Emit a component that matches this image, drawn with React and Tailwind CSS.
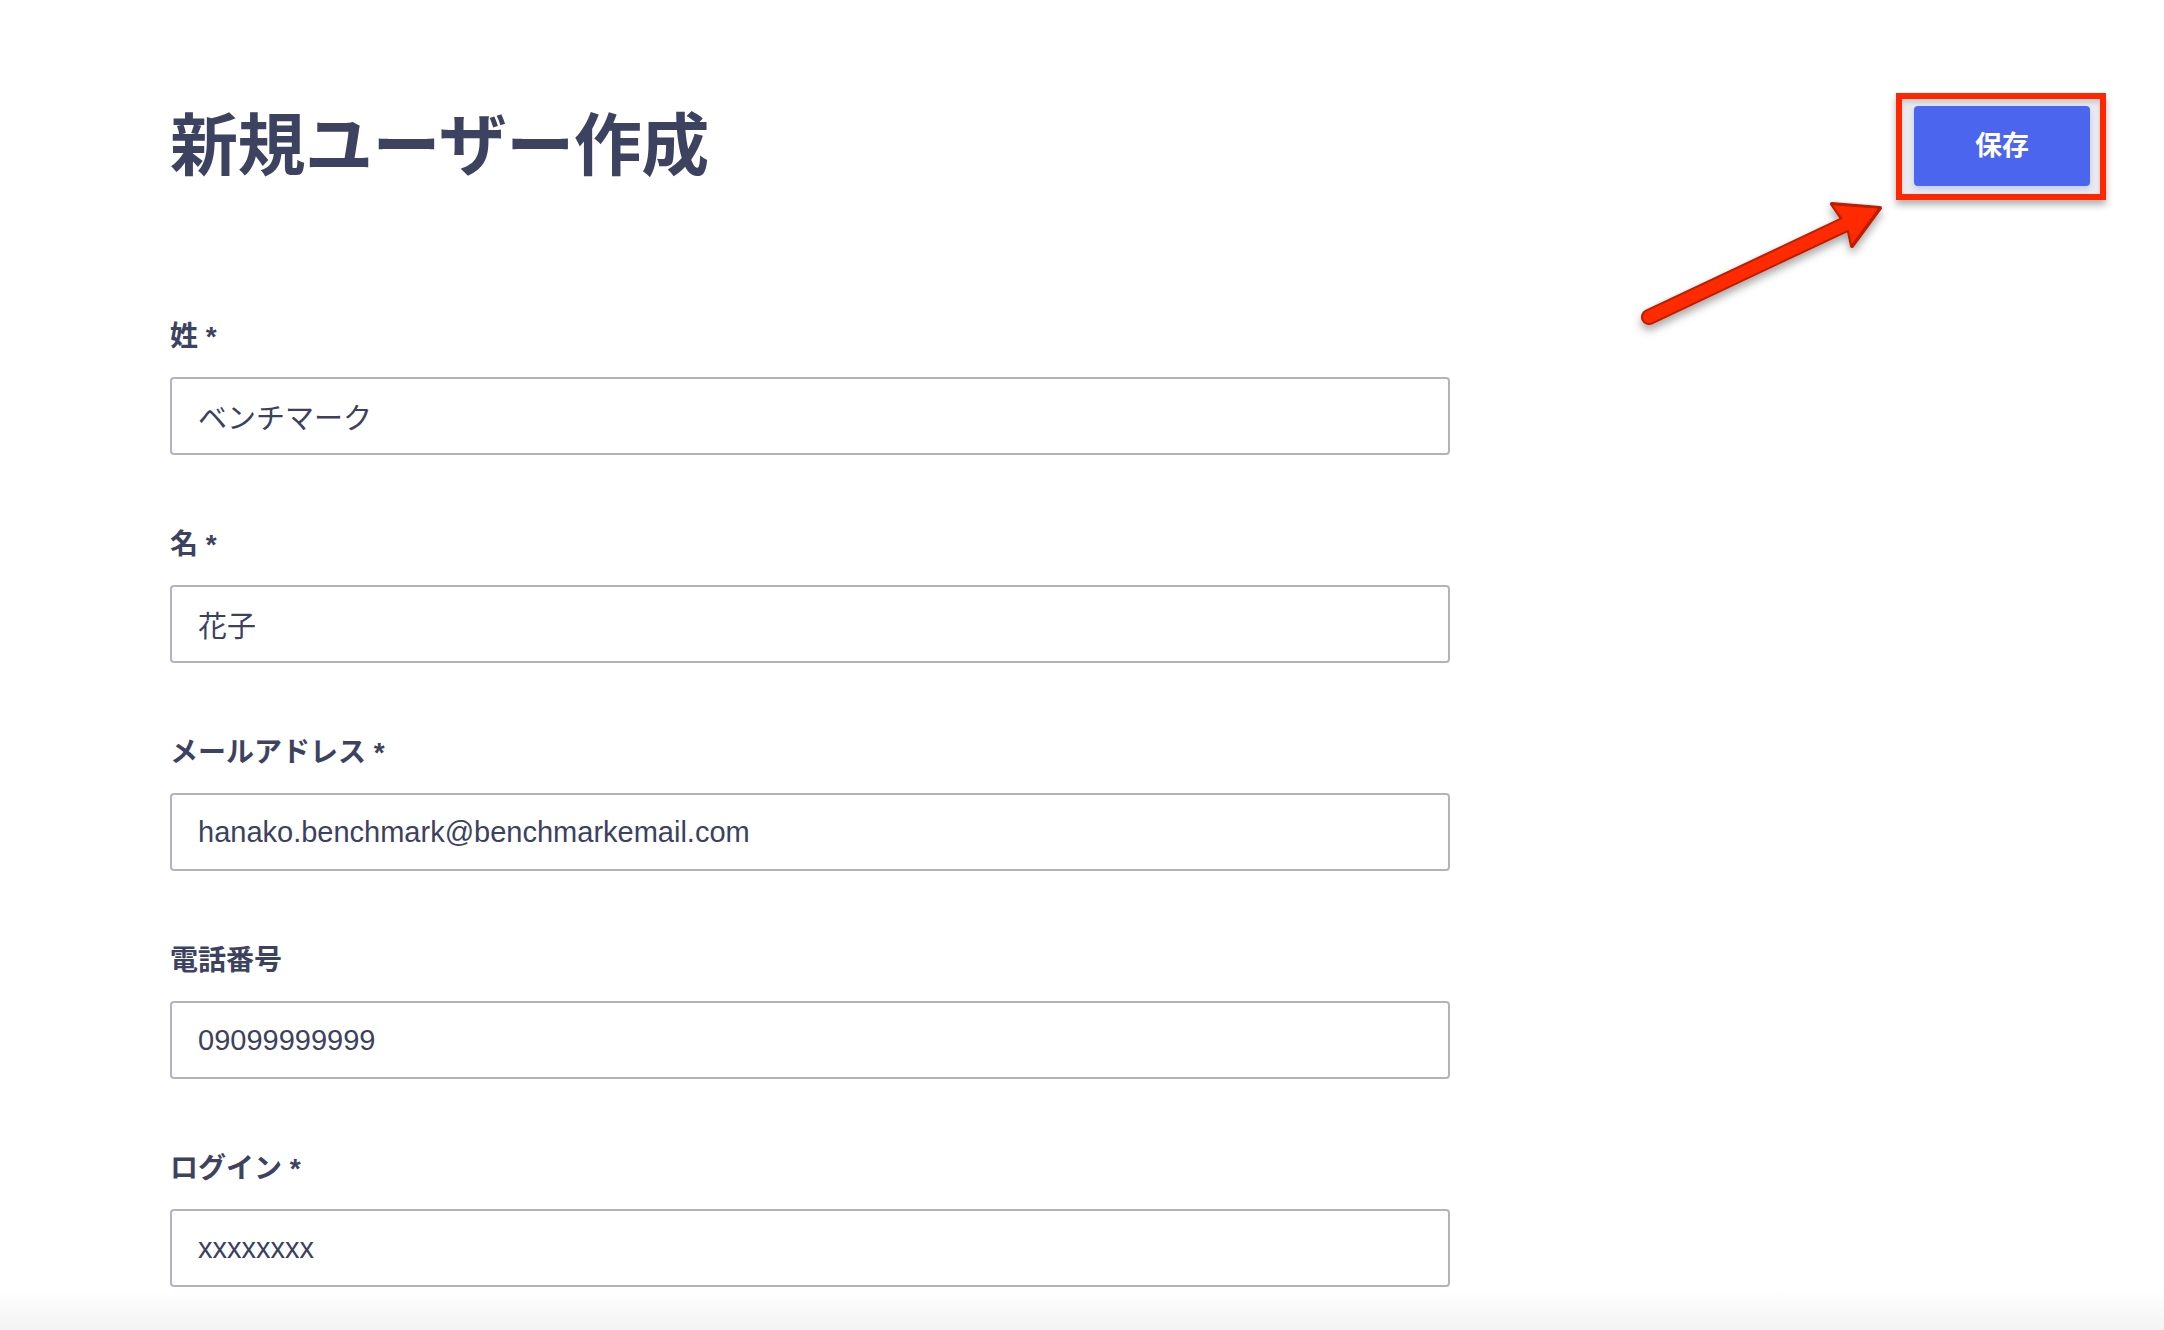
import { useState } from "react";

const fields = [
  { key: "lastName", label: "姓 *", value: "ベンチマーク" },
  { key: "firstName", label: "名 *", value: "花子" },
  { key: "email", label: "メールアドレス *", value: "hanako.benchmark@benchmarkemail.com" },
  { key: "phone", label: "電話番号", value: "09099999999" },
  { key: "login", label: "ログイン *", value: "xxxxxxxx" },
];

function Arrow() {
  // annotation arrow pointing at the save button
  return (
    <svg
      className="absolute left-[1620px] top-[190px] drop-shadow-[0_5px_4px_rgba(0,0,0,0.35)]"
      width="280"
      height="150"
      viewBox="0 0 280 150"
    >
      <line x1="29" y1="127" x2="226" y2="34" stroke="#c21c00" strokeWidth="16" strokeLinecap="round" />
      <polygon
        points="260,18 232,56 228,37 212,14"
        fill="#c21c00"
        stroke="#c21c00"
        strokeWidth="4"
        strokeLinejoin="round"
      />
      <line x1="29" y1="127" x2="226" y2="34" stroke="#ff2a00" strokeWidth="12" strokeLinecap="round" />
      <polygon
        points="257,19 232,53 228,35 214,16"
        fill="#ff2a00"
        stroke="#ff2a00"
        strokeWidth="1"
        strokeLinejoin="round"
      />
    </svg>
  );
}

export default function App() {
  const [form, setForm] = useState(
    Object.fromEntries(fields.map((f) => [f.key, f.value]))
  );

  return (
    <div className="relative w-full min-h-[1330px] bg-white text-[#3d4260] font-['Liberation_Sans','Noto_Sans_CJK_JP',sans-serif]">
      <div className="flex items-center justify-between pt-[106px] pl-[170px] pr-[74px]">
        <h1 className="text-[68px] leading-[80px] font-bold tracking-[-0.5px]">
          新規ユーザー作成
        </h1>
        <div className="relative">
          <span className="absolute -left-[18px] -right-[16px] -top-[13px] -bottom-[14px] border-[6px] border-[#ff2600] bg-[#ebebef] shadow-[0_5px_7px_rgba(0,0,0,0.3),inset_0_4px_4px_rgba(0,0,0,0.12)]"></span>
          <button className="relative z-10 w-[176px] h-[80px] rounded-[4px] bg-[#4c65ee] text-white text-[27px] font-semibold shadow-[0_3px_6px_rgba(76,101,238,0.25)]">
            保存
          </button>
        </div>
      </div>

      <Arrow />

      <div className="mt-[133px] ml-[170px] w-[1280px] flex flex-col gap-[72px]">
        {fields.map((f) => (
          <div key={f.key} className="flex flex-col gap-[22px]">
            <label className="text-[28px] leading-[36px] font-bold">{f.label}</label>
            <input
              className="h-[78px] w-full border-2 border-[#b1b3c4] rounded-[4px] pl-[26px] text-[29px] text-[#3c4160] outline-none"
              value={form[f.key]}
              onChange={(e) => setForm({ ...form, [f.key]: e.target.value })}
            />
          </div>
        ))}
      </div>

      <div className="mt-[3px] h-[40px] bg-gradient-to-b from-white to-[#f3f3f4]"></div>
    </div>
  );
}
